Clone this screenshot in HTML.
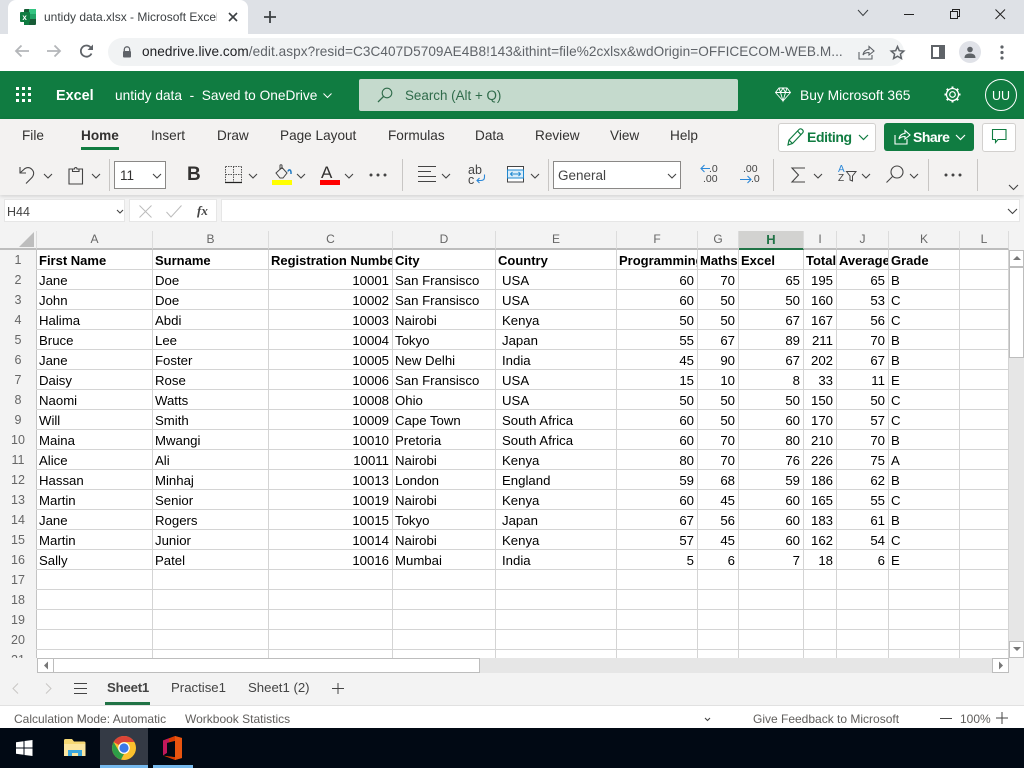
<!DOCTYPE html>
<html><head><meta charset="utf-8"><title>untidy data.xlsx - Microsoft Excel</title>
<style>
html,body{margin:0;padding:0;width:1024px;height:768px;overflow:hidden;background:#fff}
body{font-family:"Liberation Sans",sans-serif;position:relative;color:#323130}
.a{position:absolute}
.t{position:absolute;white-space:nowrap;line-height:18px}
svg{position:absolute;overflow:visible}
table{position:absolute;left:0;top:231px;border-collapse:separate;border-spacing:0;table-layout:fixed;width:1009px;font-size:13.2px;color:#000}
td{height:17px;padding:2px 3px 0 2px;border-right:1px solid #d4d4d4;border-bottom:1px solid #d4d4d4;overflow:hidden;white-space:nowrap;line-height:17px;box-sizing:content-box}
tr.h td{background:#f3f3f3;text-align:center;color:#666;font-size:12px;border-bottom:2px solid #bdbdbd;border-right:1px solid #dcdcdc;height:17px;line-height:17px;padding:0}
td.r{background:#f3f3f3;text-align:center;color:#666;font-size:12.5px;padding:2px 0 0 0;border-right:1px solid #c4c4c4;border-bottom:1px solid #f3f3f3}
td.n{text-align:right}
td.i{padding-left:6px;padding-right:0}
tr.b td{font-weight:bold;font-size:13px;padding-right:0}
tr.b td.r{font-weight:normal;font-size:12.5px}
tr.h td.s{background:#d2d2d0;color:#217346;font-weight:bold;font-size:13px;border-bottom:2px solid #217346}
</style></head><body>

<!-- Chrome tab strip -->
<div class="a" style="left:0;top:0;width:1024px;height:34px;background:#dee1e6"></div>
<div class="a" style="left:8px;top:0;width:240px;height:34px;background:#fff;border-radius:8px 8px 0 0"></div>
<svg style="left:20px;top:9px" width="16" height="16"><rect x="4" y="0" width="12" height="16" rx="1" fill="#185c37"/><rect x="9" y="0" width="7" height="5" fill="#33c481"/><rect x="9" y="5" width="7" height="5" fill="#21a366"/><rect x="4" y="10" width="5" height="6" fill="#107c41"/><rect x="0" y="3" width="10" height="10" rx="1" fill="#107c41"/><text x="2.4" y="11" font-size="8" font-weight="bold" fill="#fff" font-family="Liberation Sans">x</text></svg>
<div class="t" style="left:44px;top:8px;width:173px;overflow:hidden;font-size:12px;color:#3c4043">untidy data.xlsx - Microsoft Excel</div>
<svg style="left:228px;top:12px" width="10" height="10"><path d="M1 1L9 9M9 1L1 9" stroke="#3c4043" stroke-width="1.6"/></svg>
<svg style="left:263px;top:10px" width="14" height="14"><path d="M7 1V13M1 7H13" stroke="#3c4043" stroke-width="1.8"/></svg>
<svg style="left:857px;top:9px" width="12" height="8"><path d="M1 1L6 6.5L11 1" stroke="#3c4043" fill="none"/></svg>
<svg style="left:904px;top:14px" width="11" height="2"><path d="M0 .5H10" stroke="#222" fill="none"/></svg>
<svg style="left:950px;top:9px" width="11" height="11"><path d="M.5 2.5H7.5V9.5H.5ZM2.5 2.5V.5H9.5V7.5H7.5" stroke="#222" fill="none"/></svg>
<svg style="left:995px;top:9px" width="11" height="11"><path d="M.5 .5L10 10M10 .5L.5 10" stroke="#222" fill="none"/></svg>

<!-- Chrome toolbar -->
<div class="a" style="left:108px;top:38px;width:796px;height:28px;background:#f1f3f4;border-radius:14px"></div>
<svg style="left:14px;top:44px" width="16" height="14"><path d="M15 7H2M7.5 1.5L2 7L7.5 12.5" stroke="#b4b6b9" stroke-width="1.8" fill="none"/></svg>
<svg style="left:46px;top:44px" width="16" height="14"><path d="M1 7H14M8.5 1.5L14 7L8.5 12.5" stroke="#b4b6b9" stroke-width="1.8" fill="none"/></svg>
<svg style="left:79px;top:44px" width="15" height="15"><path d="M12.5 9.5A5.6 5.6 0 1 1 11.5 3.2" stroke="#5f6368" stroke-width="1.8" fill="none"/><path d="M8.5 6H14V.5Z" fill="#5f6368"/></svg>
<svg style="left:122px;top:46px" width="10" height="12"><path d="M2.3 5V3.5A2.7 2.7 0 0 1 7.7 3.5V5" stroke="#5f6368" stroke-width="1.3" fill="none"/><rect x="1" y="5" width="8" height="6.5" rx="1" fill="#5f6368"/></svg>
<div class="t" style="left:142px;top:43px;font-size:13.6px;letter-spacing:.06px;color:#5f6368;width:705px;overflow:hidden"><span style="color:#202124">onedrive.live.com</span>/edit.aspx?resid=C3C407D5709AE4B8!143&amp;ithint=file%2cxlsx&amp;wdOrigin=OFFICECOM-WEB.M...</div>
<svg style="left:858px;top:45px" width="17" height="15"><path d="M1 7V14H14V10M5 10C5.500 6.500 8 4.500 11 4.500V1.500L16 6L11 10V7.500C8.500 7.500 6.500 8 5 10Z" stroke="#5f6368" stroke-width="1.1" fill="none"/></svg>
<svg style="left:890px;top:45px" width="15" height="15"><path d="M7.500 1.500L9.300 5.700L13.800 6.100L10.400 9.100L11.400 13.500L7.500 11.200L3.600 13.500L4.600 9.100L1.200 6.100L5.700 5.700Z" stroke="#5f6368" stroke-width="1.500" fill="none"/></svg>
<svg style="left:931px;top:45px" width="14" height="14"><rect x="1" y="1" width="12" height="12" fill="none" stroke="#5f6368" stroke-width="2"/><rect x="8" y="1" width="5" height="12" fill="#5f6368"/></svg>
<div class="a" style="left:959px;top:41px;width:22px;height:22px;border-radius:50%;background:#e0e2e8"></div>
<svg style="left:964px;top:46px" width="12" height="12"><circle cx="6" cy="3.500" r="2.800" fill="#5f6368"/><path d="M0.500 12C0.500 8.500 3 7.500 6 7.500S11.500 8.500 11.500 12Z" fill="#5f6368"/></svg>
<svg style="left:1000px;top:45px" width="4" height="15"><circle cx="2" cy="2" r="1.600" fill="#5f6368"/><circle cx="2" cy="7.500" r="1.600" fill="#5f6368"/><circle cx="2" cy="13" r="1.600" fill="#5f6368"/></svg>

<!-- Green bar -->
<div class="a" style="left:0;top:71px;width:1024px;height:48px;background:#107c41"></div>
<svg style="left:16px;top:87px" width="16" height="16" fill="#fff"><rect width="3" height="3"/><rect x="6" width="3" height="3"/><rect x="12" width="3" height="3"/><rect y="6" width="3" height="3"/><rect x="6" y="6" width="3" height="3"/><rect x="12" y="6" width="3" height="3"/><rect y="12" width="3" height="3"/><rect x="6" y="12" width="3" height="3"/><rect x="12" y="12" width="3" height="3"/></svg>
<div class="t" style="left:56px;top:87px;font-size:14.4px;font-weight:bold;color:#fff">Excel</div>
<div class="t" style="left:115px;top:87px;font-size:13.7px;color:#fff">untidy data &nbsp;-&nbsp; Saved to OneDrive</div>
<svg style="left:323px;top:93px" width="9" height="6"><path d="M.5 .5L4.500 4.500L8.500 .5" stroke="#fff" fill="none"/></svg>
<div class="a" style="left:359px;top:79px;width:379px;height:32px;background:#c5dacd;border-radius:2px"></div>
<svg style="left:377px;top:87px" width="16" height="16"><circle cx="10" cy="6" r="4.800" stroke="#2f6b4a" fill="none" stroke-width="1.100"/><path d="M6.500 9.500L1 15" stroke="#2f6b4a" stroke-width="1.300"/></svg>
<div class="t" style="left:405px;top:87px;font-size:13.4px;color:#2f6b4a">Search (Alt + Q)</div>
<svg style="left:775px;top:87px" width="16" height="15"><path d="M4 1H12L15.500 5.500L8 14L.5 5.500ZM.5 5.500H15.500M5.500 5.500L8 14L10.500 5.500M4 1L5.500 5.500L8 1L10.500 5.500L12 1" stroke="#fff" fill="none" stroke-width=".9"/></svg>
<div class="t" style="left:800px;top:87px;font-size:13.8px;color:#fff">Buy Microsoft 365</div>
<svg style="left:944px;top:86px" width="17" height="17"><circle cx="8.500" cy="8.500" r="2.800" stroke="#fff" fill="none" stroke-width="1.200"/><circle cx="8.500" cy="8.500" r="6" stroke="#fff" fill="none" stroke-width="1.300"/><path d="M8.500 .5V3M8.500 14V16.500M.5 8.500H3M14 8.500H16.500M2.800 2.800L4.500 4.500M12.500 12.500L14.200 14.200M14.200 2.800L12.500 4.500M4.500 12.500L2.800 14.200" stroke="#fff" stroke-width="2"/></svg>
<div class="a" style="left:985px;top:79px;width:30px;height:30px;border:1px solid #fff;border-radius:50%;color:#fff;font-size:12.5px;line-height:32px;text-align:center">UU</div>

<!-- Ribbon -->
<div class="a" style="left:0;top:195px;width:1024px;height:55px;background:#f3f3f3"></div>
<div class="a" style="left:0;top:119px;width:1024px;height:76px;background:#f3f2f1;box-shadow:0 1px 4px rgba(0,0,0,.16)"></div>
<div class="t" style="left:22px;top:127px;font-size:13.6px">File</div>
<div class="t" style="left:81px;top:127px;font-size:13.6px;font-weight:bold">Home</div>
<div class="a" style="left:81px;top:147px;width:38px;height:3px;background:#107c41"></div>
<div class="t" style="left:151px;top:127px;font-size:13.6px">Insert</div>
<div class="t" style="left:217px;top:127px;font-size:13.6px">Draw</div>
<div class="t" style="left:280px;top:127px;font-size:13.6px">Page Layout</div>
<div class="t" style="left:388px;top:127px;font-size:13.6px">Formulas</div>
<div class="t" style="left:475px;top:127px;font-size:13.6px">Data</div>
<div class="t" style="left:535px;top:127px;font-size:13.6px">Review</div>
<div class="t" style="left:610px;top:127px;font-size:13.6px">View</div>
<div class="t" style="left:670px;top:127px;font-size:13.6px">Help</div>

<div class="a" style="left:778px;top:123px;width:96px;height:27px;background:#fff;border:1px solid #d2d0ce;border-radius:3px"></div>
<svg style="left:787px;top:128px" width="17" height="18"><path d="M1 17L2 12L12 1.500C13 .5 14.500 .8 15.500 1.800S16.500 4 15.500 5L5.500 15.500ZM2 12L5.500 15.500M10.500 3L14 6.800" stroke="#107c41" stroke-width="1.200" fill="none"/></svg>
<div class="t" style="left:807px;top:128px;font-size:14px;font-weight:bold;color:#107c41;letter-spacing:-.4px">Editing</div>
<svg style="left:858px;top:134px" width="11" height="7"><path d="M1 1L5.500 5.500L10 1" stroke="#107c41" stroke-width="1.200" fill="none"/></svg>
<div class="a" style="left:884px;top:123px;width:90px;height:28px;background:#107c41;border-radius:3px"></div>
<svg style="left:894px;top:129px" width="17" height="16"><path d="M1 6V15H13V10M5 10C5.500 6.500 8 4.500 11 4.500V1.500L16 6L11 10V7.500C8.500 7.500 6.500 8 5 10Z" stroke="#fff" stroke-width="1.100" fill="none"/></svg>
<div class="t" style="left:913px;top:128px;font-size:14px;font-weight:bold;color:#fff;letter-spacing:-.5px">Share</div>
<svg style="left:955px;top:134px" width="11" height="7"><path d="M1 1L5.500 5.500L10 1" stroke="#fff" stroke-width="1.200" fill="none"/></svg>
<div class="a" style="left:982px;top:123px;width:32px;height:27px;background:#fff;border:1px solid #d2d0ce;border-radius:3px"></div>
<svg style="left:992px;top:129px" width="15" height="15"><path d="M.5 .5H14V10.500H6L3.500 13.500V10.500H.5Z" stroke="#107c41" fill="none" stroke-width="1.100"/></svg>

<!-- Ribbon tools -->
<svg style="left:19px;top:165px" width="20" height="20"><path d="M1 2V8H7M1.500 7.500L6 3.500C8.500 2 11 2.500 13 4.500C15.500 7 15 10.500 12.500 13L7 18.500" stroke="#444" fill="none" stroke-width="1.100"/></svg>
<svg style="left:43px;top:173px" width="10" height="6"><path d="M1 1L5 5L9 1" stroke="#444" fill="none" stroke-width="1.100"/></svg>
<svg style="left:68px;top:166px" width="16" height="19"><path d="M4.500 3H1V18H14.500V3H11M4.500 5.500V3H6.500C6.500 1 9 1 9 3H11V5.500Z" stroke="#444" fill="none" stroke-width="1.100"/></svg>
<svg style="left:91px;top:173px" width="10" height="6"><path d="M1 1L5 5L9 1" stroke="#444" fill="none" stroke-width="1.100"/></svg>
<div class="a" style="left:109px;top:159px;width:1px;height:32px;background:#c8c6c4"></div>
<div class="a" style="left:114px;top:161px;width:50px;height:26px;background:#fff;border:1px solid #8a8886"></div>
<div class="t" style="left:120px;top:167px;font-size:13.500px">11</div>
<svg style="left:152px;top:173px" width="10" height="6"><path d="M1 1L5 5L9 1" stroke="#444" fill="none" stroke-width="1.100"/></svg>
<div class="t" style="left:187px;top:165px;font-size:19px;font-weight:bold;line-height:20px">B</div>
<svg style="left:225px;top:166px" width="18" height="18"><path d="M.5 .5H16.500M.5 8.500H16.500M.5 .5V16M8.500 .5V16M16.500 .5V16" stroke="#555" stroke-dasharray="1.500 1" fill="none"/><path d="M0 16.500H17" stroke="#222" stroke-width="1.200"/></svg>
<svg style="left:248px;top:173px" width="10" height="6"><path d="M1 1L5 5L9 1" stroke="#444" fill="none" stroke-width="1.100"/></svg>
<svg style="left:274px;top:164px" width="18" height="16"><path d="M2 9L8 3.500L13 9L9 14H6Z M6 6V1.500C6 .5 8 .5 8 1.500V5" stroke="#444" fill="none"/><path d="M14 7.500C14.500 5.500 16.500 5 17 8V10" stroke="#1f7ac4" stroke-width="1.500" fill="none"/></svg>
<div class="a" style="left:272px;top:180px;width:20px;height:5px;background:#ff0"></div>
<svg style="left:296px;top:173px" width="10" height="6"><path d="M1 1L5 5L9 1" stroke="#444" fill="none" stroke-width="1.100"/></svg>
<div class="t" style="left:321px;top:163px;font-size:17px;line-height:20px">A</div>
<div class="a" style="left:320px;top:180px;width:20px;height:5px;background:#f00"></div>
<svg style="left:344px;top:173px" width="10" height="6"><path d="M1 1L5 5L9 1" stroke="#444" fill="none" stroke-width="1.100"/></svg>
<svg style="left:369px;top:173px" width="18" height="4" fill="#444"><circle cx="2" cy="2" r="1.500"/><circle cx="9" cy="2" r="1.500"/><circle cx="16" cy="2" r="1.500"/></svg>
<div class="a" style="left:402px;top:159px;width:1px;height:32px;background:#c8c6c4"></div>
<svg style="left:418px;top:166px" width="18" height="17"><path d="M0 .5H18M0 5.500H13M0 10.500H18M0 15.500H18" stroke="#444" stroke-width="1.100"/></svg>
<svg style="left:441px;top:173px" width="10" height="6"><path d="M1 1L5 5L9 1" stroke="#444" fill="none" stroke-width="1.100"/></svg>
<div class="t" style="left:468px;top:165px;font-size:12.500px;line-height:10px;color:#444">ab<br>c</div>
<svg style="left:476px;top:174px" width="10" height="10"><path d="M8.500 .5V3C8.500 5.500 7 6.500 5 6.500H1M3.500 4L1 6.500L3.500 9" stroke="#2b88d8" fill="none" stroke-width="1.100"/></svg>
<svg style="left:507px;top:166px" width="18" height="17"><rect x=".5" y=".5" width="16" height="15.500" fill="#fff" stroke="#444"/><rect x=".5" y="4" width="16" height="8" fill="#d9ecf9" stroke="#1f88d0"/><path d="M3.500 8H13.500M5.500 6L3.500 8L5.500 10M11.500 6L13.500 8L11.500 10" stroke="#1f88d0" fill="none"/></svg>
<svg style="left:530px;top:173px" width="10" height="6"><path d="M1 1L5 5L9 1" stroke="#444" fill="none" stroke-width="1.100"/></svg>
<div class="a" style="left:548px;top:159px;width:1px;height:32px;background:#c8c6c4"></div>
<div class="a" style="left:553px;top:161px;width:126px;height:26px;background:#fff;border:1px solid #8a8886"></div>
<div class="t" style="left:558px;top:167px;font-size:13.500px;color:#444">General</div>
<svg style="left:667px;top:173px" width="10" height="6"><path d="M1 1L5 5L9 1" stroke="#444" fill="none" stroke-width="1.100"/></svg>
<svg style="left:700px;top:164px" width="10" height="9"><path d="M10 4.500H1M4.500 1L1 4.500L4.500 8" stroke="#2b88d8" fill="none" stroke-width="1.100"/></svg>
<div class="t" style="left:709px;top:164px;font-size:10.500px;line-height:10px;color:#444">.0</div>
<div class="t" style="left:703px;top:174px;font-size:10.500px;line-height:10px;color:#444">.00</div>
<div class="t" style="left:743px;top:164px;font-size:10.500px;line-height:10px;color:#444">.00</div>
<svg style="left:740px;top:175px" width="12" height="9"><path d="M0 4.500H11M7.500 1L11 4.500L7.500 8" stroke="#2b88d8" fill="none" stroke-width="1.100"/></svg>
<div class="t" style="left:751px;top:174px;font-size:10.500px;line-height:10px;color:#444">.0</div>
<div class="a" style="left:773px;top:159px;width:1px;height:32px;background:#c8c6c4"></div>
<svg style="left:791px;top:167px" width="15" height="16"><path d="M14 1H1L7.500 8L1 15H14" stroke="#444" fill="none" stroke-width="1.100"/></svg>
<svg style="left:813px;top:173px" width="10" height="6"><path d="M1 1L5 5L9 1" stroke="#444" fill="none" stroke-width="1.100"/></svg>
<div class="t" style="left:838px;top:165px;font-size:10px;line-height:9px;color:#444"><span style="color:#2b88d8">A</span><br>Z</div>
<svg style="left:846px;top:171px" width="11" height="11"><path d="M.5 .5H10L6.500 5V10L4 9V5Z" stroke="#444" fill="none"/></svg>
<svg style="left:861px;top:173px" width="10" height="6"><path d="M1 1L5 5L9 1" stroke="#444" fill="none" stroke-width="1.100"/></svg>
<svg style="left:886px;top:165px" width="18" height="18"><circle cx="11" cy="7" r="6" stroke="#444" fill="none" stroke-width="1.100"/><path d="M6.500 11.500L.5 17.500" stroke="#444" stroke-width="1.100"/></svg>
<svg style="left:909px;top:173px" width="10" height="6"><path d="M1 1L5 5L9 1" stroke="#444" fill="none" stroke-width="1.100"/></svg>
<div class="a" style="left:928px;top:159px;width:1px;height:32px;background:#c8c6c4"></div>
<svg style="left:944px;top:173px" width="18" height="4" fill="#444"><circle cx="2" cy="2" r="1.500"/><circle cx="9" cy="2" r="1.500"/><circle cx="16" cy="2" r="1.500"/></svg>
<div class="a" style="left:977px;top:159px;width:1px;height:32px;background:#c8c6c4"></div>
<svg style="left:1008px;top:184px" width="11" height="7"><path d="M1 1L5.500 5.500L10 1" stroke="#444" fill="none" stroke-width="1.100"/></svg>

<!-- Formula bar -->
<div class="a" style="left:4px;top:199px;width:121px;height:23px;background:#fff;box-shadow:0 0 0 1px #e6e6e6 inset"></div>
<div class="t" style="left:7px;top:203px;font-size:12.500px;color:#444">H44</div>
<svg style="left:116px;top:209px" width="8" height="5"><path d="M1 1L4 4L7 1" stroke="#444" fill="none" stroke-width="1.100"/></svg>
<div class="a" style="left:129px;top:199px;width:88px;height:23px;background:#fff;box-shadow:0 0 0 1px #e6e6e6 inset"></div>
<svg style="left:139px;top:205px" width="13" height="13"><path d="M.5 .5L12.500 12.500M12.500 .5L.5 12.500" stroke="#bcbcbc"/></svg>
<svg style="left:166px;top:205px" width="16" height="13"><path d="M.5 7L5 12L15.500 .5" stroke="#bcbcbc" fill="none"/></svg>
<div class="t" style="left:197px;top:202px;font-size:13px;font-family:'Liberation Serif',serif;font-style:italic;font-weight:bold;color:#444">fx</div>
<div class="a" style="left:221px;top:199px;width:799px;height:23px;background:#fff;box-shadow:0 0 0 1px #e6e6e6 inset"></div>
<svg style="left:1007px;top:208px" width="11" height="7"><path d="M1 1L5.500 5.500L10 1" stroke="#444" fill="none" stroke-width="1.100"/></svg>

<!-- Grid -->
<table>
<colgroup><col style="width:37px"><col style="width:116px"><col style="width:116px"><col style="width:124px"><col style="width:103px"><col style="width:121px"><col style="width:81px"><col style="width:41px"><col style="width:65px"><col style="width:33px"><col style="width:52px"><col style="width:71px"><col style="width:49px"></colgroup>
<tr class="h"><td style="border-right:1px solid #dcdcdc"></td><td>A</td><td>B</td><td>C</td><td>D</td><td>E</td><td>F</td><td>G</td><td class="s">H</td><td>I</td><td>J</td><td>K</td><td>L</td></tr>
<tr class="b"><td class="r">1</td><td>First Name</td><td>Surname</td><td>Registration Number</td><td>City</td><td>Country</td><td>Programming</td><td>Maths</td><td>Excel</td><td>Total</td><td>Average</td><td>Grade</td><td></td></tr>
<tr><td class="r">2</td><td>Jane</td><td>Doe</td><td class="n">10001</td><td>San Fransisco</td><td class="i">USA</td><td class="n">60</td><td class="n">70</td><td class="n">65</td><td class="n">195</td><td class="n">65</td><td>B</td><td></td></tr>
<tr><td class="r">3</td><td>John</td><td>Doe</td><td class="n">10002</td><td>San Fransisco</td><td class="i">USA</td><td class="n">60</td><td class="n">50</td><td class="n">50</td><td class="n">160</td><td class="n">53</td><td>C</td><td></td></tr>
<tr><td class="r">4</td><td>Halima</td><td>Abdi</td><td class="n">10003</td><td>Nairobi</td><td class="i">Kenya</td><td class="n">50</td><td class="n">50</td><td class="n">67</td><td class="n">167</td><td class="n">56</td><td>C</td><td></td></tr>
<tr><td class="r">5</td><td>Bruce</td><td>Lee</td><td class="n">10004</td><td>Tokyo</td><td class="i">Japan</td><td class="n">55</td><td class="n">67</td><td class="n">89</td><td class="n">211</td><td class="n">70</td><td>B</td><td></td></tr>
<tr><td class="r">6</td><td>Jane</td><td>Foster</td><td class="n">10005</td><td>New Delhi</td><td class="i">India</td><td class="n">45</td><td class="n">90</td><td class="n">67</td><td class="n">202</td><td class="n">67</td><td>B</td><td></td></tr>
<tr><td class="r">7</td><td>Daisy</td><td>Rose</td><td class="n">10006</td><td>San Fransisco</td><td class="i">USA</td><td class="n">15</td><td class="n">10</td><td class="n">8</td><td class="n">33</td><td class="n">11</td><td>E</td><td></td></tr>
<tr><td class="r">8</td><td>Naomi</td><td>Watts</td><td class="n">10008</td><td>Ohio</td><td class="i">USA</td><td class="n">50</td><td class="n">50</td><td class="n">50</td><td class="n">150</td><td class="n">50</td><td>C</td><td></td></tr>
<tr><td class="r">9</td><td>Will</td><td>Smith</td><td class="n">10009</td><td>Cape Town</td><td class="i">South Africa</td><td class="n">60</td><td class="n">50</td><td class="n">60</td><td class="n">170</td><td class="n">57</td><td>C</td><td></td></tr>
<tr><td class="r">10</td><td>Maina</td><td>Mwangi</td><td class="n">10010</td><td>Pretoria</td><td class="i">South Africa</td><td class="n">60</td><td class="n">70</td><td class="n">80</td><td class="n">210</td><td class="n">70</td><td>B</td><td></td></tr>
<tr><td class="r">11</td><td>Alice</td><td>Ali</td><td class="n">10011</td><td>Nairobi</td><td class="i">Kenya</td><td class="n">80</td><td class="n">70</td><td class="n">76</td><td class="n">226</td><td class="n">75</td><td>A</td><td></td></tr>
<tr><td class="r">12</td><td>Hassan</td><td>Minhaj</td><td class="n">10013</td><td>London</td><td class="i">England</td><td class="n">59</td><td class="n">68</td><td class="n">59</td><td class="n">186</td><td class="n">62</td><td>B</td><td></td></tr>
<tr><td class="r">13</td><td>Martin</td><td>Senior</td><td class="n">10019</td><td>Nairobi</td><td class="i">Kenya</td><td class="n">60</td><td class="n">45</td><td class="n">60</td><td class="n">165</td><td class="n">55</td><td>C</td><td></td></tr>
<tr><td class="r">14</td><td>Jane</td><td>Rogers</td><td class="n">10015</td><td>Tokyo</td><td class="i">Japan</td><td class="n">67</td><td class="n">56</td><td class="n">60</td><td class="n">183</td><td class="n">61</td><td>B</td><td></td></tr>
<tr><td class="r">15</td><td>Martin</td><td>Junior</td><td class="n">10014</td><td>Nairobi</td><td class="i">Kenya</td><td class="n">57</td><td class="n">45</td><td class="n">60</td><td class="n">162</td><td class="n">54</td><td>C</td><td></td></tr>
<tr><td class="r">16</td><td>Sally</td><td>Patel</td><td class="n">10016</td><td>Mumbai</td><td class="i">India</td><td class="n">5</td><td class="n">6</td><td class="n">7</td><td class="n">18</td><td class="n">6</td><td>E</td><td></td></tr>
<tr><td class="r">17</td><td></td><td></td><td></td><td></td><td></td><td></td><td></td><td></td><td></td><td></td><td></td><td></td></tr>
<tr><td class="r">18</td><td></td><td></td><td></td><td></td><td></td><td></td><td></td><td></td><td></td><td></td><td></td><td></td></tr>
<tr><td class="r">19</td><td></td><td></td><td></td><td></td><td></td><td></td><td></td><td></td><td></td><td></td><td></td><td></td></tr>
<tr><td class="r">20</td><td></td><td></td><td></td><td></td><td></td><td></td><td></td><td></td><td></td><td></td><td></td><td></td></tr>
<tr><td class="r">21</td><td></td><td></td><td></td><td></td><td></td><td></td><td></td><td></td><td></td><td></td><td></td><td></td></tr>
</table>
<!-- Select-all corner triangle -->
<svg style="left:19px;top:232px" width="16" height="16"><path d="M15 0V15H0Z" fill="#bdbdbd"/></svg>

<!-- Vertical scrollbar -->
<div class="a" style="left:1009px;top:250px;width:15px;height:408px;background:#e6e6e6"></div>
<div class="a" style="left:1009px;top:250px;width:13px;height:15px;background:#fff;border:1px solid #bdbdbd"></div>
<svg style="left:1012px;top:255px" width="10" height="6"><path d="M1 5L5 1L9 5Z" fill="#777"/></svg>
<div class="a" style="left:1009px;top:267px;width:13px;height:89px;background:#fff;border:1px solid #bdbdbd"></div>
<div class="a" style="left:1009px;top:641px;width:13px;height:15px;background:#fff;border:1px solid #bdbdbd"></div>
<svg style="left:1012px;top:646px" width="10" height="6"><path d="M1 1L5 5L9 1Z" fill="#777"/></svg>

<!-- Horizontal scrollbar and bottom -->
<div class="a" style="left:0;top:658px;width:1024px;height:47px;background:#f3f3f3"></div>
<div class="a" style="left:37px;top:658px;width:972px;height:15px;background:#e6e6e6"></div>
<div class="a" style="left:37px;top:658px;width:15px;height:13px;background:#fff;border:1px solid #bdbdbd"></div>
<svg style="left:43px;top:661px" width="6" height="9"><path d="M5 .5L1 4.500L5 8.500Z" fill="#777"/></svg>
<div class="a" style="left:53px;top:658px;width:425px;height:13px;background:#fff;border:1px solid #bdbdbd"></div>
<div class="a" style="left:992px;top:658px;width:15px;height:13px;background:#fff;border:1px solid #bdbdbd"></div>
<svg style="left:998px;top:661px" width="6" height="9"><path d="M1 .5L5 4.500L1 8.500Z" fill="#777"/></svg>

<!-- Sheet tabs -->
<svg style="left:12px;top:683px" width="7" height="11"><path d="M6 .5L1 5.500L6 10.500" stroke="#c8c6c4" fill="none"/></svg>
<svg style="left:45px;top:683px" width="7" height="11"><path d="M1 .5L6 5.500L1 10.500" stroke="#c8c6c4" fill="none"/></svg>
<svg style="left:74px;top:683px" width="13" height="11"><path d="M0 .5H13M0 5.500H13M0 10.500H13" stroke="#444" stroke-width="1.100"/></svg>
<div class="t" style="left:107px;top:679px;font-size:13.200px;font-weight:bold;color:#444;letter-spacing:-.2px">Sheet1</div>
<div class="a" style="left:105px;top:702px;width:45px;height:3px;background:#217346"></div>
<div class="t" style="left:171px;top:679px;font-size:13.200px;color:#444">Practise1</div>
<div class="t" style="left:248px;top:679px;font-size:13.200px;color:#444">Sheet1 (2)</div>
<svg style="left:332px;top:683px" width="12" height="11"><path d="M6 0V11M0 5.500H12" stroke="#444"/></svg>
<div class="a" style="left:0;top:705px;width:1024px;height:1px;background:#e1e1e1"></div>

<!-- Status bar -->
<div class="a" style="left:0;top:706px;width:1024px;height:22px;background:#fff"></div>
<div class="t" style="left:14px;top:710px;font-size:12px;color:#605e5c">Calculation Mode: Automatic</div>
<div class="t" style="left:185px;top:710px;font-size:12px;color:#605e5c">Workbook Statistics</div>
<svg style="left:704px;top:717px" width="7" height="5"><path d="M1 1L3.500 3.500L6 1" stroke="#444" fill="none" stroke-width="1.100"/></svg>
<div class="t" style="left:753px;top:710px;font-size:12px;color:#605e5c">Give Feedback to Microsoft</div>
<svg style="left:940px;top:718px" width="12" height="2"><path d="M0 .5H12" stroke="#444"/></svg>
<div class="t" style="left:960px;top:710px;font-size:12px;color:#605e5c">100%</div>
<svg style="left:996px;top:712px" width="12" height="12"><path d="M6 0V12M0 6H12" stroke="#444"/></svg>

<!-- Taskbar -->
<div class="a" style="left:0;top:728px;width:1024px;height:40px;background:#010914"></div>
<svg style="left:16px;top:740px" width="17" height="16" fill="#fff"><path d="M0 2.300L7.500 1.200V7.500H0ZM8.500 1L16.500 0V7.500H8.500ZM0 8.500H7.500V14.800L0 13.700ZM8.500 8.500H16.500V16L8.500 15Z"/></svg>
<svg style="left:64px;top:739px" width="22" height="18"><path d="M0 1.500C0 .5 .5 0 1.500 0H8L10 2.500H20C21 2.500 21.500 3 21.500 4V17H0Z" fill="#f6d874"/><rect x="0" y="5" width="21.500" height="12" fill="#fce6a0"/><path d="M4 17V11H18V17H14V14H8V17Z" fill="#3aa6dd"/></svg>
<div class="a" style="left:100px;top:728px;width:48px;height:40px;background:#343a45"></div>
<div class="a" style="left:100px;top:765px;width:48px;height:3px;background:#76b9ed"></div>
<svg style="left:112px;top:736px" width="24" height="24"><circle cx="12" cy="12" r="12" fill="#fbc02d"/><path d="M12 0A12 12 0 0 1 22.400 6H12A6 6 0 0 0 6.800 9L1.600 6A12 12 0 0 1 12 0Z" fill="#db4437"/><path d="M1.600 6L6.800 15C7.800 16.800 9.800 18 12 18L9 23.600A12 12 0 0 1 1.600 6Z" fill="#2e9e47"/><circle cx="12" cy="12" r="5.800" fill="#fff"/><circle cx="12" cy="12" r="4.600" fill="#3b78e7"/></svg>
<div class="a" style="left:153px;top:765px;width:40px;height:3px;background:#76b9ed"></div>
<svg style="left:163px;top:736px" width="20" height="24"><path d="M0 4.500L12 0L19 2V22L12 24L0 19.500L12 21V5L4 7V17L0 19.500Z" fill="#d83b01"/><path d="M0 4.500L6 2.300V6.500L4 7V17L0 19.500Z" fill="#c2185b"/><path d="M12 0L19 2V22L12 24Z" fill="#e8540f"/><path d="M4 7L12 5V21L0 19.500L4 17Z" fill="#010914"/></svg>
</body></html>
